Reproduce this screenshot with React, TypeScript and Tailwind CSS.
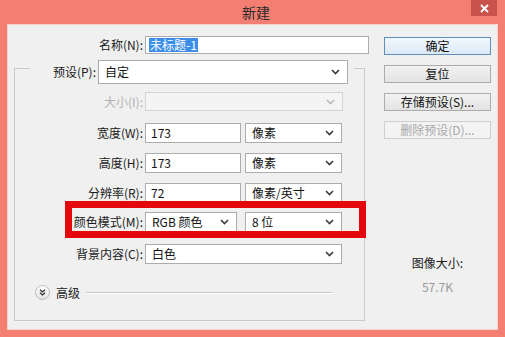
import React from "react";

const font = "font-['Noto_Sans_CJK_SC','Microsoft_YaHei',sans-serif]";

const Chevron = ({ disabled }: { disabled?: boolean }) => (
  <svg width="9" height="6" viewBox="0 0 9 6" className="shrink-0">
    <polyline points="1,1 4.5,4.5 8,1" fill="none" stroke={disabled ? "#b8b8b8" : "#3a3a3a"} strokeWidth="1.6" />
  </svg>
);

type FieldProps = { value?: string; w: string; h?: string; disabled?: boolean };

const Select: React.FC<FieldProps> = ({ value, w, h = "h-[20px]", disabled }) => (
  <div
    className={`${w} ${h} shrink-0 flex items-center justify-between pl-[6px] pr-[7px] border ${
      disabled ? "border-[#d4d4d4] bg-[#f4f4f4]" : "border-[#acacac] bg-white"
    } text-[12px] text-[#111]`}
  >
    <span className="leading-none">{value}</span>
    <Chevron disabled={disabled} />
  </div>
);

const Input: React.FC<FieldProps> = ({ value, w, h = "h-[20px]" }) => (
  <div className={`${w} ${h} shrink-0 flex items-center pl-[5px] border border-[#acacac] bg-white text-[12px] text-[#111]`}>
    <span className="leading-none">{value}</span>
  </div>
);

const Label = ({ text, disabled, w = "w-[130px]" }: { text: string; disabled?: boolean; w?: string }) => (
  <div className={`${w} shrink-0 text-right text-[12px] pr-[2px] ${disabled ? "text-[#b0b0b0]" : "text-[#1a1a1a]"}`}>{text}</div>
);

const Btn = ({ text, primary, disabled }: { text: string; primary?: boolean; disabled?: boolean }) => (
  <div
    className={`h-[18px] w-[107px] flex items-center justify-center text-[12px] border ${
      primary
        ? "border-[#5d8fbf] bg-gradient-to-b from-[#f2f7fd] to-[#dde9f7] text-[#111]"
        : disabled
        ? "border-[#cfcfcf] bg-[#f3f3f3] text-[#a8a8a8]"
        : "border-[#acacac] bg-gradient-to-b from-[#f2f2f2] to-[#e3e3e3] text-[#111]"
    }`}
  >
    {text}
  </div>
);

export default function App() {
  return (
    <div className={`w-[505px] h-[337px] bg-[#f27f72] flex flex-col px-[7px] pb-[7px] ${font}`}>
      <div className="h-[24px] shrink-0 flex items-start">
        <div className="w-[34px]" />
        <div className="flex-1 text-center text-[14px] leading-[24px] text-[#2a2a2a]">新建</div>
        <div className="w-[26px] h-[16px] bg-[#c9524c] flex items-center justify-center">
          <svg width="9" height="9" viewBox="0 0 9 9">
            <path d="M1 1L8 8M8 1L1 8" stroke="#fff" strokeWidth="1.8" />
          </svg>
        </div>
        <div className="w-[1px]" />
      </div>

      <div className="relative flex-1 bg-[#f0f0f0] flex border border-[#f7d3cd]">
        <div className="w-[369px] shrink-0 flex flex-col">
          <div className="flex items-center mt-[11px] h-[18px]">
            <Label text="名称(N):" w="w-[137px]" />
            <div className="w-[224px] h-[18px] flex items-center pl-[3px] border border-[#acacac] bg-white text-[12px]">
              <span className="bg-[#3d8ee8] text-white leading-[14px] px-[1px]">未标题-1</span>
            </div>
          </div>

          <div className="ml-[6px] mt-[14px] w-[351px] h-[253px] border border-[#c9c9c9] flex flex-col">
            <div className="flex items-center -mt-[9px] ml-[15px] w-[324px] h-[24px] bg-[#f0f0f0]">
              <Label text="预设(P):" w="w-[68px]" />
              <Select value="自定" w="w-[250px]" h="h-[24px]" />
            </div>
            <div className="flex items-center mt-[8px]">
              <Label text="大小(I):" disabled />
              <Select w="w-[198px]" h="h-[19px]" disabled />
            </div>
            <div className="flex items-center mt-[12px]">
              <Label text="宽度(W):" />
              <Input value="173" w="w-[96px]" />
              <div className="w-[4px]" />
              <Select value="像素" w="w-[97px]" />
            </div>
            <div className="flex items-center mt-[10px]">
              <Label text="高度(H):" />
              <Input value="173" w="w-[96px]" />
              <div className="w-[4px]" />
              <Select value="像素" w="w-[97px]" />
            </div>
            <div className="flex items-center mt-[10px]">
              <Label text="分辨率(R):" />
              <Input value="72" w="w-[96px]" />
              <div className="w-[4px]" />
              <Select value="像素/英寸" w="w-[97px]" />
            </div>
            <div className="flex items-center mt-[9px]">
              <Label text="颜色模式(M):" />
              <Select value="RGB 颜色" w="w-[92px]" />
              <div className="w-[8px]" />
              <Select value="8 位" w="w-[97px]" />
            </div>
            <div className="flex items-center mt-[12px]">
              <Label text="背景内容(C):" />
              <Select value="白色" w="w-[197px]" />
            </div>
            <div className="flex items-center mt-[21px] ml-[20px] h-[15px]">
              <div className="w-[15px] h-[15px] rounded-full border border-[#bdbdbd] bg-gradient-to-b from-white to-[#e2e2e2] flex items-center justify-center">
                <svg width="7" height="7" viewBox="0 0 7 7">
                  <polyline points="1,0.8 3.5,3 6,0.8" fill="none" stroke="#333" strokeWidth="1.3" />
                  <polyline points="1,3.8 3.5,6 6,3.8" fill="none" stroke="#333" strokeWidth="1.3" />
                </svg>
              </div>
              <span className="ml-[6px] text-[12px] text-[#1a1a1a]">高级</span>
              <div className="ml-[6px] w-[246px] h-[2px] border-t border-[#c8c8c8] border-b border-b-white" />
            </div>
          </div>
        </div>

        <div className="w-[107px] ml-[7px] flex flex-col items-center pt-[12px]">
          <div className="flex flex-col gap-[10px]">
            <Btn text="确定" primary />
            <Btn text="复位" />
            <Btn text="存储预设(S)..." />
            <Btn text="删除预设(D)..." disabled />
          </div>
          <div className="mt-[116px] text-[12px] leading-[16px] text-[#1a1a1a]">图像大小:</div>
          <div className="mt-[8px] text-[12px] leading-[16px] text-[#9a9a9a]">57.7K</div>
        </div>

        <div className="absolute left-[57px] top-[176px] w-[301px] h-[37px] border-[7px] border-[#e3080c]" />
      </div>
    </div>
  );
}
